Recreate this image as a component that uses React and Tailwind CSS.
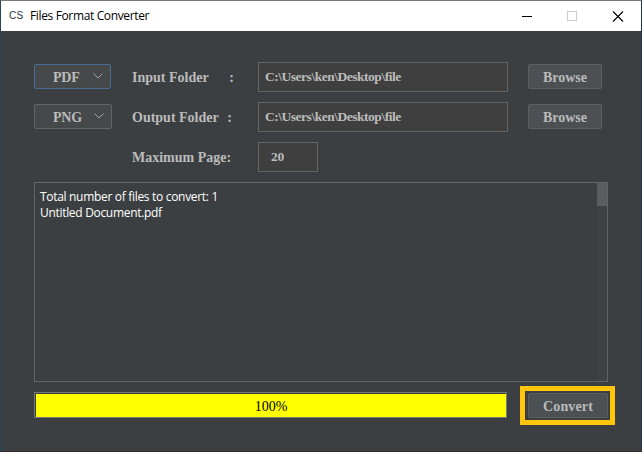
const serif = "font-['Liberation_Serif',serif] font-bold";
const sans = "font-['Open_Sans',sans-serif]";

function Select({ label, className }) {
  return (
    <button className={`mb-[2px] flex h-[25px] items-center justify-between rounded-[2px] border bg-[#45494a] pr-[7px] pl-[18px] text-[14px] text-[#bbbbbb] ${serif} ${className}`}>
      <span className="pt-[2px] leading-[23px] tracking-[-0.2px]">{label}</span>
      <svg className="h-[6px] w-[10px]" viewBox="0 0 10 6" fill="none" stroke="#a3a5a6" strokeWidth="1">
        <path d="M.5 .5 5 5 9.5 .5" />
      </svg>
    </button>
  );
}

function Field({ value, className }) {
  return (
    <div className={`h-[30px] border border-[#646464] bg-[#3f3f3f] text-[13.5px] leading-[28px] whitespace-nowrap text-[#bbbbbb] ${serif} ${className}`}>
      {value}
    </div>
  );
}

function Button({ children, className }) {
  return (
    <button className={`flex h-[25px] items-center justify-center rounded-[2px] border border-[#5e6060] bg-[#4c5052] text-[14px] leading-[23px] text-[#bbbbbb] ${serif} ${className}`}>
      {children}
    </button>
  );
}

function Label({ children, colon, className = "" }) {
  return (
    <div className={`flex justify-between pt-[2px] text-[14px] leading-[30px] whitespace-pre text-[#bbbbbb] ${serif} ${className}`}>
      <span>{children}</span>
      {colon && <span>:</span>}
    </div>
  );
}

function TitleBar() {
  return (
    <header className="flex h-[30px] items-center bg-white pr-[17px] pl-[8px]">
      <span className="w-[21px] pb-px font-['Liberation_Sans',sans-serif] text-[10px] leading-[29px] tracking-[0.3px] text-[#26303f]">CS</span>
      <span className={`flex-1 text-[12px] leading-[30px] tracking-[-0.36px] text-black ${sans}`}>Files Format Converter</span>
      <svg className="h-[11px] w-[102px]" viewBox="0 0 102 11" fill="none" shapeRendering="crispEdges">
        <path d="M0 5.5h10" stroke="#000" />
        <path d="M45.5 .5h9v9h-9z" stroke="#cccccc" />
        <path d="M91 .5l10 10M101 .5l-10 10" stroke="#000" strokeWidth="1.1" shapeRendering="auto" />
      </svg>
    </header>
  );
}

export default function App() {
  return (
    <div className="flex h-[452px] w-[642px] flex-col border border-t-[#777777] border-r-[#26384a] border-b-[#38282c] border-l-[#24485a] bg-[#3c3f41]">
      <TitleBar />
      <main className="pt-[31px] pl-[33px]">
        <div className="grid grid-cols-[98px_126px_270px_80px] auto-rows-[30px] items-center gap-y-[10px]">
          <Select label="PDF" className="w-[77px] border-[#466d94]" />
          <Label colon className="w-[102px]">Input Folder</Label>
          <Field value="C:\Users\ken\Desktop\file" className="w-[250px] pl-[6px] tracking-[-0.48px]" />
          <Button className="mb-[2px] w-[74px] pt-[2px]">Browse</Button>

          <Select label="PNG" className="w-[78px] border-[#646464]" />
          <Label colon className="w-[100px]">Output Folder</Label>
          <Field value="C:\Users\ken\Desktop\file" className="w-[250px] pl-[6px] tracking-[-0.48px]" />
          <Button className="mb-[2px] w-[74px] pt-[2px]">Browse</Button>

          <span />
          <Label>Maximum Page:</Label>
          <Field value="20" className="w-[60px] pl-[12px] tracking-[-0.3px]" />
        </div>

        <section className="mt-[10px] flex h-[200px] w-[574px] border border-[#646464]">
          <div className={`flex-1 pt-[6px] pl-[5px] text-[12px] leading-[16px] tracking-[-0.31px] text-white ${sans}`}>
            <p>Total number of files to convert: 1</p>
            <p>Untitled Document.pdf</p>
          </div>
          <div className="w-[10px] bg-[#3f4244]">
            <div className="h-[23px] bg-[#595d5f]" />
          </div>
        </section>

        <div className="mt-[4px] flex items-center">
          <div className="mt-[-1px] h-[26px] w-[473px] border border-[#777777] bg-[#3c3f41] pt-px pl-px">
            <div className="h-[23px] bg-[#ffff00] text-center font-['Liberation_Serif',serif] text-[14px] leading-[25px] text-black">100%</div>
          </div>
          <div className="ml-[13px] h-[39px] w-[95px] border-5 border-[#ffc60d] pt-[2px] pl-[3px]">
            <Button className="w-[80px] pt-px tracking-[0.15px]">Convert</Button>
          </div>
        </div>
      </main>
    </div>
  );
}
